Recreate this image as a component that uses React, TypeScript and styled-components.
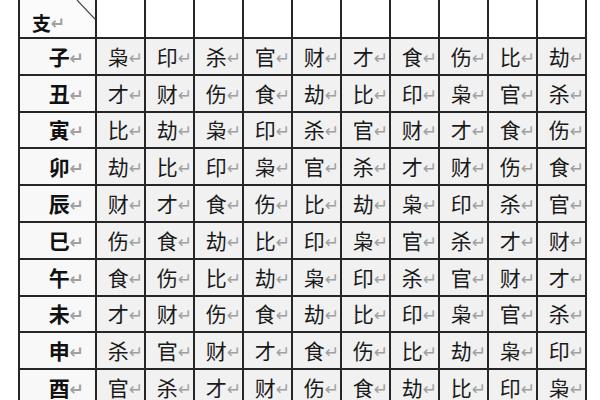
import styled, { createGlobalStyle } from "styled-components";

const GlobalStyle = createGlobalStyle`
  html, body {
    margin: 0;
    padding: 0;
    background: #ffffff;
  }
`;

const branches = ["子", "丑", "寅", "卯", "辰", "巳", "午", "未", "申", "酉"];

const rows: string[][] = [
  ["枭", "印", "杀", "官", "财", "才", "食", "伤", "比", "劫"],
  ["才", "财", "伤", "食", "劫", "比", "印", "枭", "官", "杀"],
  ["比", "劫", "枭", "印", "杀", "官", "财", "才", "食", "伤"],
  ["劫", "比", "印", "枭", "官", "杀", "才", "财", "伤", "食"],
  ["财", "才", "食", "伤", "比", "劫", "枭", "印", "杀", "官"],
  ["伤", "食", "劫", "比", "印", "枭", "官", "杀", "才", "财"],
  ["食", "伤", "比", "劫", "枭", "印", "杀", "官", "财", "才"],
  ["才", "财", "伤", "食", "劫", "比", "印", "枭", "官", "杀"],
  ["杀", "官", "财", "才", "食", "伤", "比", "劫", "枭", "印"],
  ["官", "杀", "才", "财", "伤", "食", "劫", "比", "印", "枭"],
];

const Page = styled.div`
  width: 600px;
  height: 400px;
  overflow: hidden;
  padding-left: 18px;
  box-sizing: border-box;
`;

const Table = styled.div`
  display: grid;
  width: 565px;
  grid-template-columns: 75px repeat(10, 1fr);
  grid-template-rows: 37px;
  grid-auto-rows: 34.8px;
  gap: 2px;
  padding: 0 2px;
  background: #262626;
  font-family: "Noto Sans CJK SC", "Noto Sans", sans-serif;
`;

const HeaderCorner = styled.div`
  position: relative;
  background: #fbfbfb;
  display: flex;
  align-items: flex-end;
  padding: 0 0 5px 12px;
  font-size: 19px;
  font-weight: 700;
  color: #111;
  line-height: 1;
`;

const Diagonal = styled.svg`
  position: absolute;
  left: 0;
  top: 0;
  width: 75px;
  height: 37px;
`;

const HeaderBlank = styled.div`
  background: #ffffff;
`;

const Label = styled.div`
  background: #f8f8f8;
  display: flex;
  align-items: center;
  justify-content: flex-end;
  padding-right: 11px;
  font-size: 21px;
  font-weight: 700;
  color: #111;
  line-height: 1;
`;

const Cell = styled.div`
  background: #f1f1f1;
  display: flex;
  align-items: center;
  justify-content: flex-end;
  padding-right: 1px;
  font-size: 21px;
  font-weight: 400;
  color: #1a1a1a;
  line-height: 1;
`;

const Mark = styled.span`
  font-family: "DejaVu Sans", sans-serif;
  font-size: 17px;
  color: #a0a0a0;
  margin-top: 4px;
`;

export default function App() {
  return (
    <Page>
      <GlobalStyle />
      <Table>
        <HeaderCorner>
          支<Mark>↵</Mark>
          <Diagonal viewBox="0 0 75 37">
            <line x1="57" y1="0" x2="75" y2="19" stroke="#444" strokeWidth="1.2" />
          </Diagonal>
        </HeaderCorner>
        {rows[0].map((_, i) => (
          <HeaderBlank key={"h" + i} />
        ))}
        {branches.map((b, r) => [
          <Label key={"l" + r}>
            {b}
            <Mark>↵</Mark>
          </Label>,
          ...rows[r].map((c, i) => (
            <Cell key={r + "-" + i}>
              {c}
              <Mark>↵</Mark>
            </Cell>
          )),
        ])}
      </Table>
    </Page>
  );
}
